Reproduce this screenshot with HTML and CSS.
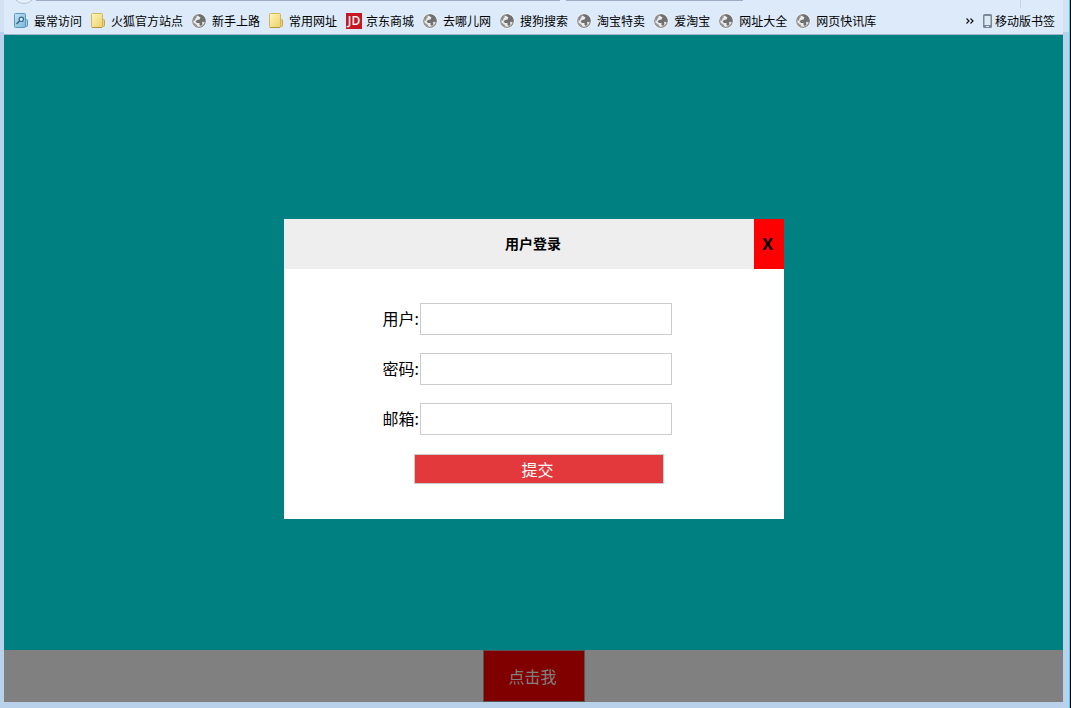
FILE: index.html
```html
<!DOCTYPE html>
<html lang="zh-CN">
<head>
<meta charset="utf-8">
<title>用户登录</title>
<link rel="stylesheet" href="styles.css">
</head>
<body>
<svg class="defs" aria-hidden="true">
  <defs>
    <linearGradient id="gold" x1="0" y1="0" x2="1" y2="1"><stop offset="0" stop-color="#fff6b8"/><stop offset="1" stop-color="#ecd06c"/></linearGradient>
    <linearGradient id="azure" x1="0" y1="0" x2="1" y2="1"><stop offset="0" stop-color="#c4e4f6"/><stop offset="1" stop-color="#7db6d8"/></linearGradient>
    <symbol id="folder" viewBox="0 0 16 16">
      <path d="M10 6.500h2.500q1 0 1 1v5q0 1-1 1H10z" fill="#ead27c" stroke="#c9a548"/>
      <path d="M.5 1.500q0-1 1-1h9q1 0 1 1v12q0 1-1 1h-9q-1 0-1-1z" fill="url(#gold)" stroke="#d3b55c"/>
      <path d="M1 14.500h10" stroke="#b8923c"/>
    </symbol>
    <symbol id="visited" viewBox="0 0 16 16">
      <path d="M10 6.500h2.500q1 0 1 1v5q0 1-1 1H10z" fill="#a9cfe5" stroke="#5792b5"/>
      <path d="M.5 1.500q0-1 1-1h9q1 0 1 1v12q0 1-1 1h-9q-1 0-1-1z" fill="url(#azure)" stroke="#5b98bd"/>
      <circle cx="7.300" cy="6.300" r="2.200" fill="#d8eef9" stroke="#35688c" stroke-width="1.200"/>
      <path d="M5.500 8 2.500 11" stroke="#35688c" stroke-width="1.600"/>
    </symbol>
    <symbol id="globe" viewBox="0 0 16 16">
      <circle cx="7" cy="8" r="7.500" fill="#fff"/>
      <circle cx="7" cy="8" r="6.300" fill="#ececec" stroke="#8c8c8c" stroke-width="1.200"/>
      <path d="M1 7.500Q1.500 4 4 2.800L5 4 3.500 5.500 3 7.500z" fill="#8c8c8c"/>
      <path d="M5 2.200 8 1.500 11.500 3 13.300 6 13.500 8.500 12 9.500 11 8.500 10 9.500 10.500 11.500 9 13 7.500 12 7.500 10 5 10 3.500 8.500 5 7 7.500 6.500 8.500 4.500z" fill="#707070"/>
      <path d="M1 9.500 3 10.500 5 12 5.500 14 2.500 12.500z" fill="#999"/>
    </symbol>
  </defs>
</svg>
<div class="window">
  <header class="toolbar">
    <div class="nav-edge"><span class="back"></span><span class="address"></span><span class="search"></span><span class="separator"></span></div>
    <nav class="bookmarks">
      <a class="bookmark" href="#"><svg class="icon"><use href="#visited"/></svg>最常访问</a>
      <a class="bookmark" href="#"><svg class="icon"><use href="#folder"/></svg>火狐官方站点</a>
      <a class="bookmark" href="#"><svg class="icon"><use href="#globe"/></svg>新手上路</a>
      <a class="bookmark" href="#"><svg class="icon"><use href="#folder"/></svg>常用网址</a>
      <a class="bookmark" href="#"><span class="icon jd">JD</span>京东商城</a>
      <a class="bookmark" href="#"><svg class="icon"><use href="#globe"/></svg>去哪儿网</a>
      <a class="bookmark" href="#"><svg class="icon"><use href="#globe"/></svg>搜狗搜索</a>
      <a class="bookmark" href="#"><svg class="icon"><use href="#globe"/></svg>淘宝特卖</a>
      <a class="bookmark" href="#"><svg class="icon"><use href="#globe"/></svg>爱淘宝</a>
      <a class="bookmark" href="#"><svg class="icon"><use href="#globe"/></svg>网址大全</a>
      <a class="bookmark" href="#"><svg class="icon"><use href="#globe"/></svg>网页快讯库</a>
      <button class="more" type="button" aria-label="更多书签"><svg class="chevrons" viewBox="0 0 8 6"><path d="M.5.500 3 3 .5 5.500M4.500.500 7 3 4.500 5.500" fill="none" stroke="#111" stroke-width="1.200"/></svg></button>
      <a class="bookmark mobile" href="#"><svg class="phone" viewBox="0 0 9 14"><rect width="9" height="14" rx="1.500" fill="#788996"/><rect x="1.500" y="2" width="6" height="9" fill="#dce9f5"/><rect x="3" y="12" width="3" height="1" fill="#dce9f5"/></svg>移动版书签</a>
    </nav>
  </header>
  <main class="page">
    <div class="backdrop"></div>
    <div class="footer"><button class="open" type="button">点击我</button></div>
    <div class="overlay">
      <section class="dialog" role="dialog" aria-labelledby="title">
        <div class="dialog-head">
          <h1 class="title" id="title">用户登录</h1>
          <button class="close" type="button">X</button>
        </div>
        <form class="form">
          <div class="row"><label class="label" for="user">用户:</label><input class="field" id="user" type="text"></div>
          <div class="row"><label class="label" for="password">密码:</label><input class="field" id="password" type="password"></div>
          <div class="row"><label class="label" for="email">邮箱:</label><input class="field" id="email" type="email"></div>
          <button class="submit" type="submit">提交</button>
        </form>
      </section>
    </div>
  </main>
</div>
</body>
</html>
```
FILE: styles.css
```css
* { box-sizing: border-box; }
body {
  margin: 0;
  font-family: "Noto Sans CJK SC", sans-serif;
  font-size: 16px;
  color: #000;
}
button, input { font: inherit; }
.defs { position: absolute; width: 0; height: 0; }
.window {
  display: flex;
  flex-direction: column;
  min-height: 100vh;
  padding: 0 7px 6px 4px;
  border-right: 1px solid #000;
  box-shadow: inset -1px 0 #3fd0ee;
  background: linear-gradient(#d3e2f3 32px, #bad1ec 32px);
}
.toolbar {
  height: 35px;
  overflow: hidden;
  background: #dceafa;
  border-bottom: 1px solid #a3b4c8;
}
.nav-edge { display: flex; height: 8px; padding-left: 8px; }
.back {
  flex: none;
  width: 24px;
  height: 24px;
  margin-top: -20px;
  border: 1px solid #b4c3d5;
  border-radius: 50%;
  background: #e6f0fb;
}
.address { flex: 525; height: 1px; background: #9eacc5; }
.search { flex: 177; height: 1px; margin-left: 6px; background: #9eacc5; }
.separator { flex: 277; margin-right: 42px; border-right: 1px solid #c3d2e3; }
.bookmarks {
  display: flex;
  align-items: center;
  gap: 9px;
  height: 26px;
  padding: 0 8px 0 10px;
  font-size: 12px;
  line-height: 16px;
}
.bookmark {
  display: flex;
  align-items: center;
  gap: 4px;
  color: #000;
  text-decoration: none;
  white-space: nowrap;
}
.icon { width: 16px; height: 16px; }
.jd {
  background: #c91623;
  color: #fff;
  font: 600 12px/16px "Open Sans", sans-serif;
  text-align: center;
}
.more { margin-left: auto; padding: 0; border: 0; background: none; }
.chevrons { display: block; width: 8px; height: 6px; }
.phone { width: 9px; height: 14px; }
.mobile { gap: 3px; }
.page {
  position: relative;
  display: flex;
  flex: 1;
  flex-direction: column;
}
.backdrop { flex: 1; background: #008080; }
.footer { display: flex; justify-content: center; background: #808080; }
.open {
  width: 102px;
  height: 52px;
  padding: 0 8px 0 6px;
  border: 1px solid #555;
  background: #800000;
  color: #808080;
}
.overlay { position: absolute; inset: 0; display: grid; place-items: center; }
.dialog { width: 500px; max-width: 100%; background: #fff; }
.dialog-head { display: flex; background: #eee; }
.title {
  flex: 1;
  height: 50px;
  margin: 0;
  padding-left: 29px;
  font-size: 14px;
  line-height: 48px;
  text-align: center;
}
.close {
  width: 30px;
  padding: 0 2px 0 0;
  border: 0;
  background: #f00;
  font: 700 16px "Open Sans", sans-serif;
}
.form {
  display: flex;
  flex-direction: column;
  padding: 34px 112px 35px 99px;
}
.row { display: flex; align-items: center; margin-bottom: 18px; }
.label { width: 37px; padding-bottom: 2px; white-space: nowrap; }
.field {
  flex: 1;
  min-width: 0;
  height: 32px;
  padding: 0 8px;
  border: 1px solid #ccc;
  background: #fff;
}
.submit {
  height: 30px;
  margin: 1px 8px 0 31px;
  padding: 0 2px 0 0;
  border: 1px solid #ccc;
  background: #e4393c;
  color: #fff;
  line-height: 28px;
}
```
